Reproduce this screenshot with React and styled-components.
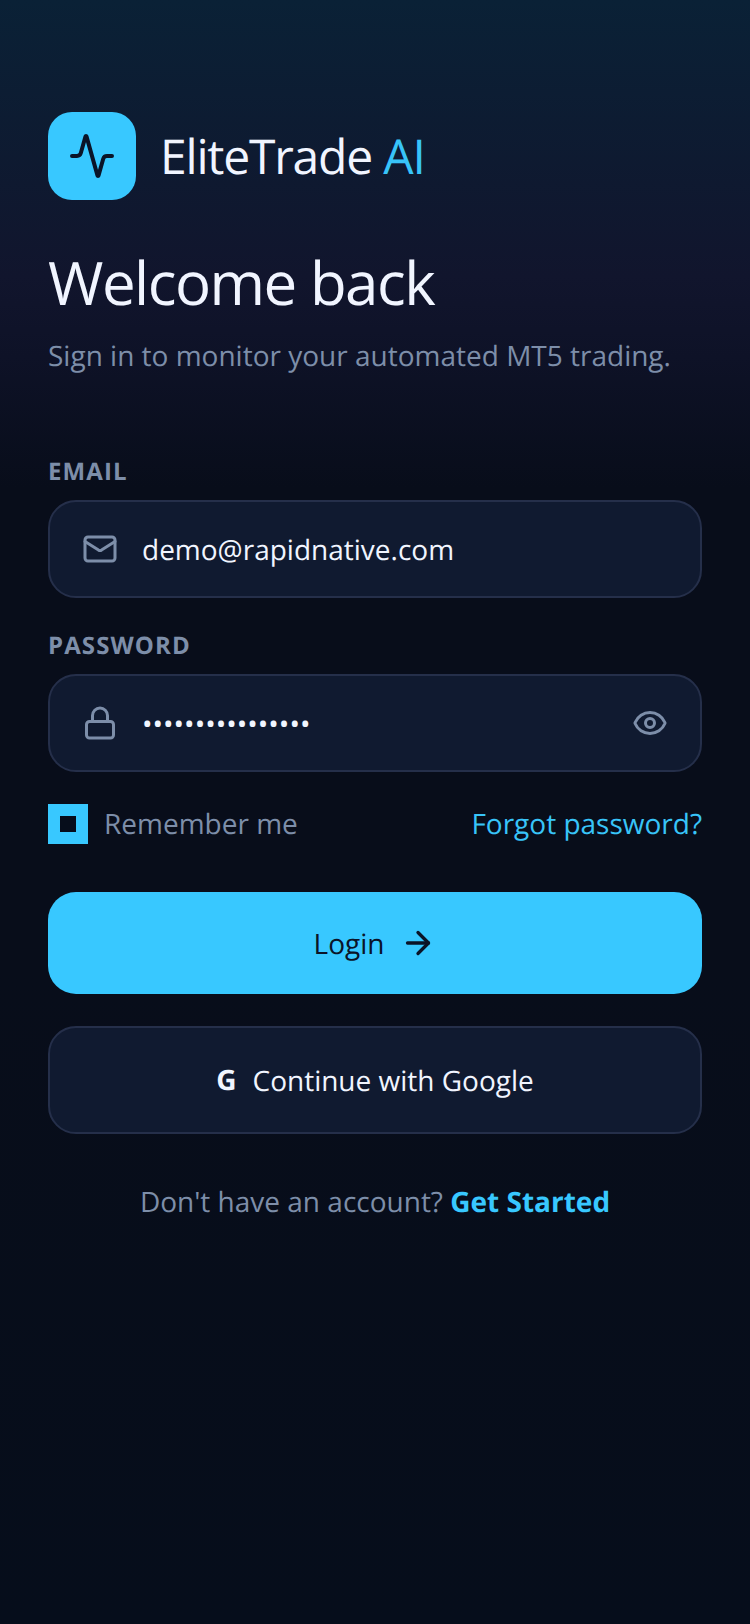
import React from "react";
import styled, { createGlobalStyle } from "styled-components";
import { Mail, Lock, Eye, ArrowRight, Activity } from "lucide-react";

const GlobalStyle = createGlobalStyle`
  html, body {
    margin: 0;
    padding: 0;
    background: #060d1b;
  }
  * {
    box-sizing: border-box;
  }
`;

const Screen = styled.div`
  width: 750px;
  height: 1624px;
  padding: 112px 48px 0;
  display: flex;
  flex-direction: column;
  font-family: "Open Sans", sans-serif;
  text-rendering: geometricPrecision;
  background: linear-gradient(180deg, #0a2136 0%, #11152d 17%, #0e1227 22%, #080d1a 30%, #080d1a 60%, #060d1b 100%);
`;

const Brand = styled.div`
  display: flex;
  align-items: center;
  gap: 24px;
`;

const LogoBox = styled.div`
  width: 88px;
  height: 88px;
  border-radius: 24px;
  background: #38c8ff;
  display: flex;
  align-items: center;
  justify-content: center;
  color: #0a1428;
`;

const BrandName = styled.div`
  padding-top: 2px;
  font-size: 48px;
  line-height: 64px;
  color: #f1f5ff;
  letter-spacing: -1.2px;
`;

const BrandAccent = styled.span`
  color: #38c4f8;
`;

const Title = styled.h1`
  margin: 40px 0 0;
  font-size: 60px;
  line-height: 84px;
  font-weight: 400;
  letter-spacing: -1.5px;
  color: #f1f5ff;
`;

const Subtitle = styled.p`
  margin: 12px 0 0;
  font-size: 28px;
  line-height: 40px;
  color: #7d8ea9;
`;

const Form = styled.div`
  margin-top: 80px;
  display: flex;
  flex-direction: column;
`;

const Label = styled.label`
  font-size: 24px;
  line-height: 32px;
  font-weight: 700;
  letter-spacing: 1.1px;
  color: #7d8ea9;
  margin-bottom: 12px;
`;

const Field = styled.div`
  height: 98px;
  padding: 0 32px;
  margin-bottom: ${(props) => props.$gap || 0}px;
  display: flex;
  align-items: center;
  gap: 24px;
  border-radius: 28px;
  border: 2px solid #252f4a;
  background: #101a30;
  color: #7d8ea9;
`;

const FieldValue = styled.div`
  flex: 1;
  padding-top: 2px;
  font-size: 28px;
  line-height: 40px;
  color: #f1f5ff;
`;

const OptionsRow = styled.div`
  margin-top: 32px;
  display: flex;
  align-items: center;
  justify-content: space-between;
`;

const Remember = styled.div`
  display: flex;
  align-items: center;
  gap: 16px;
  font-size: 28px;
  line-height: 40px;
  color: #7d8ea9;
`;

const Checkbox = styled.div`
  width: 40px;
  height: 40px;
  background: #38c8ff;
  display: flex;
  align-items: center;
  justify-content: center;
`;

const CheckMark = styled.div`
  width: 16px;
  height: 16px;
  background: #060d1b;
`;

const ForgotLink = styled.a`
  font-size: 28px;
  line-height: 40px;
  color: #38c4f8;
`;

const PrimaryButton = styled.button`
  margin-top: 48px;
  height: 102px;
  border: none;
  border-radius: 28px;
  background: #38c8ff;
  color: #0a1428;
  font-family: inherit;
  font-size: 28px;
  text-rendering: inherit;
  display: flex;
  align-items: center;
  justify-content: center;
  gap: 16px;
`;

const GoogleButton = styled.button`
  margin-top: 32px;
  height: 108px;
  border: 2px solid #252f4a;
  border-radius: 28px;
  background: #101a30;
  color: #f1f5ff;
  font-family: inherit;
  font-size: 28px;
  text-rendering: inherit;
  display: flex;
  align-items: center;
  justify-content: center;
  gap: 16px;
`;

const ButtonLabel = styled.span`
  padding-top: 2px;
`;

const GoogleMark = styled.span`
  font-size: 28px;
  font-weight: 700;
`;

const Footer = styled.p`
  margin: 48px 0 0;
  text-align: center;
  font-size: 28px;
  line-height: 40px;
  color: #7d8ea9;
`;

const FooterLink = styled.a`
  font-weight: 700;
  color: #38c8ff;
`;

const App = () => {
  return (
    <Screen>
      <GlobalStyle />
      <Brand>
        <LogoBox>
          <Activity size={48} strokeWidth={2} />
        </LogoBox>
        <BrandName>
          EliteTrade <BrandAccent>AI</BrandAccent>
        </BrandName>
      </Brand>
      <Title>Welcome back</Title>
      <Subtitle>Sign in to monitor your automated MT5 trading.</Subtitle>
      <Form>
        <Label>EMAIL</Label>
        <Field $gap={32}>
          <Mail size={36} strokeWidth={2} />
          <FieldValue>demo@rapidnative.com</FieldValue>
        </Field>
        <Label>PASSWORD</Label>
        <Field>
          <Lock size={36} strokeWidth={2} />
          <FieldValue>••••••••••••••••</FieldValue>
          <Eye size={36} strokeWidth={2} />
        </Field>
        <OptionsRow>
          <Remember>
            <Checkbox>
              <CheckMark />
            </Checkbox>
            Remember me
          </Remember>
          <ForgotLink>Forgot password?</ForgotLink>
        </OptionsRow>
        <PrimaryButton>
          <ButtonLabel>Login</ButtonLabel>
          <ArrowRight size={36} strokeWidth={2.2} />
        </PrimaryButton>
        <GoogleButton>
          <GoogleMark>G</GoogleMark>
          <ButtonLabel>Continue with Google</ButtonLabel>
        </GoogleButton>
        <Footer>
          Don't have an account? <FooterLink>Get Started</FooterLink>
        </Footer>
      </Form>
    </Screen>
  );
};

export default App;
